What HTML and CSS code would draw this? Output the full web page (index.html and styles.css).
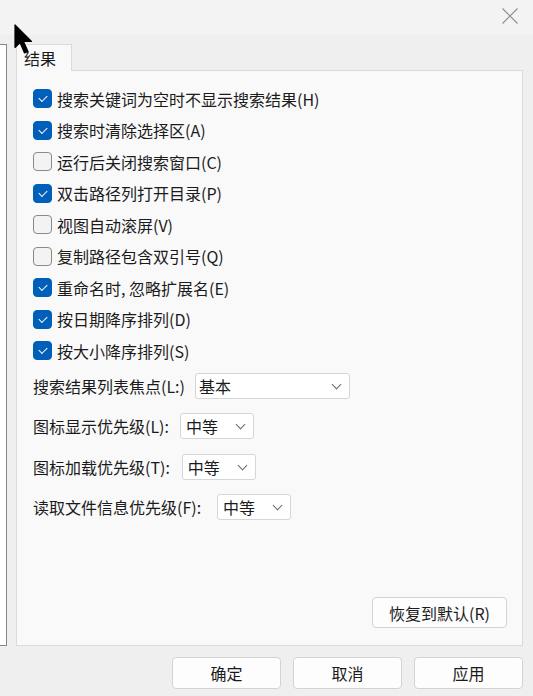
FILE: index.html
```html
<!DOCTYPE html>
<html lang="zh-CN">
<head>
<meta charset="utf-8">
<link rel="stylesheet" href="styles.css">
</head>
<body>
<div class="window">
  <div class="titlebar">
    <svg class="close" width="16" height="16" viewBox="0 0 16 16"><path d="M0.5 0.5 L15.5 15.5 M15.5 0.5 L0.5 15.5" stroke="#8c8c8c" stroke-width="1.1" fill="none"/></svg>
  </div>
  <div class="main">
    <div class="sidebar"></div>
    <div class="content">
      <div class="tabs"><div class="tab">结果</div></div>
      <div class="panel">
        <div class="checks">
          <label class="row"><span class="cb on"></span>搜索关键词为空时不显示搜索结果(H)</label>
          <label class="row"><span class="cb on"></span>搜索时清除选择区(A)</label>
          <label class="row"><span class="cb"></span>运行后关闭搜索窗口(C)</label>
          <label class="row"><span class="cb on"></span>双击路径列打开目录(P)</label>
          <label class="row"><span class="cb"></span>视图自动滚屏(V)</label>
          <label class="row"><span class="cb"></span>复制路径包含双引号(Q)</label>
          <label class="row"><span class="cb on"></span>重命名时, 忽略扩展名(E)</label>
          <label class="row"><span class="cb on"></span>按日期降序排列(D)</label>
          <label class="row"><span class="cb on"></span>按大小降序排列(S)</label>
        </div>
        <div class="selects">
          <div class="srow"><span class="lbl">搜索结果列表焦点(L:)</span><span class="sel wide g1">基本</span></div>
          <div class="srow"><span class="lbl">图标显示优先级(L):</span><span class="sel g2">中等</span></div>
          <div class="srow"><span class="lbl">图标加载优先级(T):</span><span class="sel g3">中等</span></div>
          <div class="srow"><span class="lbl">读取文件信息优先级(F):</span><span class="sel g4">中等</span></div>
        </div>
        <div class="reset-row"><button class="btn reset">恢复到默认(R)</button></div>
      </div>
    </div>
  </div>
  <div class="footer">
    <button class="btn">确定</button>
    <button class="btn">取消</button>
    <button class="btn">应用</button>
  </div>
  <svg class="cursor" width="20" height="31" viewBox="0 0 20 31"><path d="M1 1 L1 23.5 L6 18.5 L10.5 29 L14 27.5 L9.5 17.5 L17.5 17.5 Z" fill="#000" stroke="#000" stroke-width="1.2" stroke-linejoin="round"/></svg>
</div>
</body>
</html>
```
FILE: styles.css
```css
* { box-sizing: border-box; }
html, body { margin: 0; padding: 0; }
body {
  width: 533px;
  height: 696px;
  overflow: hidden;
  background: #efefef;
  font-family: "Microsoft YaHei UI", "Noto Sans CJK SC", "Noto Sans", sans-serif;
  font-size: 16px;
  color: #1b1b1b;
}
.window {
  position: relative;
  width: 533px;
  height: 696px;
  display: flex;
  flex-direction: column;
}
.titlebar {
  height: 35px;
  background: #f3f3f3;
  display: flex;
  justify-content: flex-end;
  align-items: flex-start;
  padding: 8px 15px 0 0;
}
.close { display: block; }
.main {
  display: flex;
  padding-top: 9px;
  height: 611px;
}
.sidebar {
  width: 7px;
  height: 602px;
  background: #ffffff;
  border: 1px solid #858585;
  border-left: none;
}
.content {
  margin-left: 9px;
  width: 507px;
  display: flex;
  flex-direction: column;
}
.tabs {
  height: 26px;
  display: flex;
  position: relative;
  z-index: 1;
}
.tab {
  width: 56px;
  height: 27px;
  background: #f9f9f9;
  border: 1px solid #dadada;
  border-bottom: none;
  padding-left: 7px;
  line-height: 26px;
  font-size: 16px;
}
.panel {
  height: 576px;
  background: #f9f9f9;
  border: 1px solid #dadada;
  padding: 12px 16px 0 16px;
  display: flex;
  flex-direction: column;
}
.checks { display: flex; flex-direction: column; }
.row {
  height: 31.5px;
  display: flex;
  align-items: center;
  line-height: 20px;
}
.cb {
  width: 19px;
  height: 19px;
  border-radius: 4px;
  border: 1px solid #8a8a8a;
  background: #f3f3f3;
  margin-right: 5px;
  flex: none;
  position: relative;
}
.cb.on {
  background: #005fb8;
  border-color: #005fb8;
}
.cb.on::after {
  content: "";
  position: absolute;
  left: 5px;
  top: 3px;
  width: 7px;
  height: 4px;
  border-left: 1.3px solid #fff;
  border-bottom: 1.3px solid #fff;
  transform: translate(0, 2px) rotate(-45deg);
}
.selects {
  display: flex;
  flex-direction: column;
  margin-top: -1px;
}
.srow {
  height: 40.5px;
  display: flex;
  align-items: center;
  line-height: 20px;
}
.sel {
  position: relative;
  height: 26px;
  width: 74px;
  background: #ffffff;
  border: 1px solid #d6d6d6;
  border-radius: 3px;
  padding-left: 5px;
  line-height: 24px;
}
.sel.wide { width: 155px; padding-left: 3px; }
.g1 { margin-left: 10px; }
.g2 { margin-left: 11px; }
.g3 { margin-left: 12px; }
.g4 { margin-left: 16px; }
.sel::after {
  content: "";
  position: absolute;
  right: 9px;
  top: 7px;
  width: 6px;
  height: 6px;
  border-right: 1px solid #6a6a6a;
  border-bottom: 1px solid #6a6a6a;
  transform: rotate(45deg);
}
.reset-row {
  margin-top: auto;
  margin-bottom: 17px;
  display: flex;
  justify-content: flex-end;
}
.btn {
  font-family: inherit;
  font-size: 16px;
  color: #1b1b1b;
  background: #fdfdfd;
  border: 1px solid #d3d3d3;
  border-radius: 4px;
  height: 32px;
  width: 109px;
  padding: 0;
  line-height: 30px;
}
.reset { width: 135px; height: 31px; margin-right: -1px; }
.footer {
  display: flex;
  justify-content: flex-end;
  gap: 12px;
  padding: 11px 10px 0 0;
}
.cursor {
  position: absolute;
  left: 14px;
  top: 24px;
  z-index: 10;
}
```
